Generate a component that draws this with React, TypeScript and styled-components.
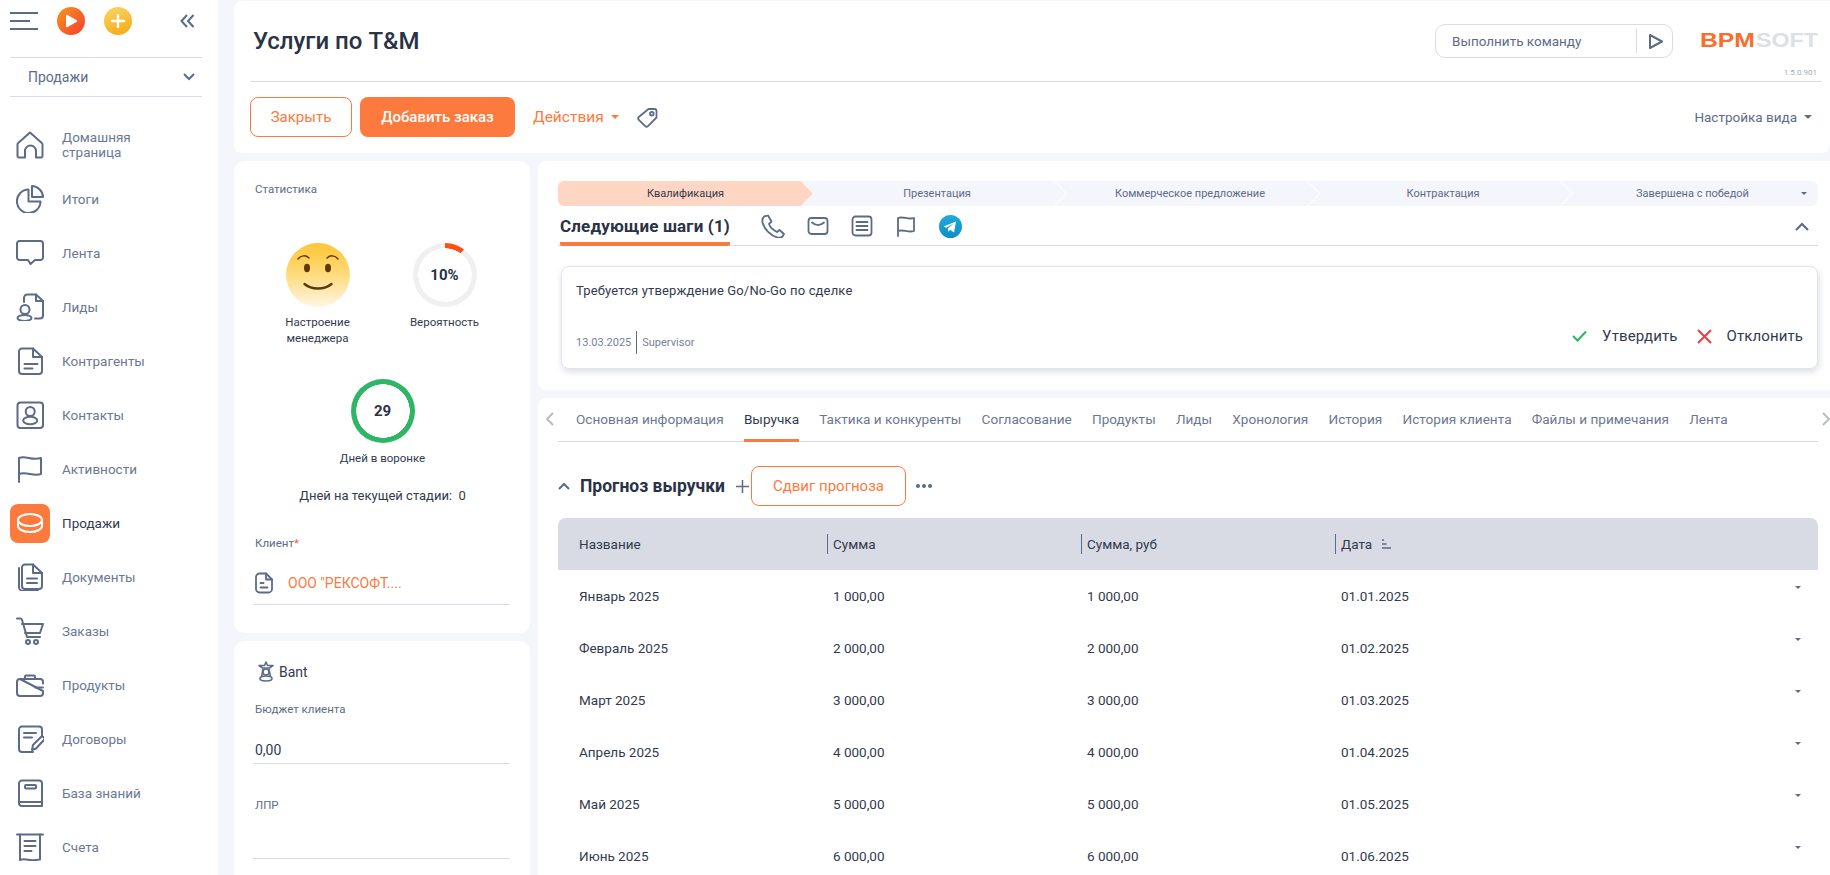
import React from 'react';
import styled, { createGlobalStyle } from 'styled-components';

const ink = '#5d6b89';
const orange = '#fd7a3e';
const line = '#d9dce5';
const text = '#323a4e';

const GlobalStyle = createGlobalStyle`
  html, body {
    margin: 0;
    padding: 0;
    height: 100%;
    background: #f4f6fb;
    font-family: Roboto, "Noto Sans", sans-serif;
    color: ${text};
  }
  * { box-sizing: border-box; }
`;

const Stroke = ({ size = 28, box = 28, width = 2, children }: { size?: number; box?: number; width?: number; children: React.ReactNode }) => (
  <svg width={size} height={size} viewBox={`0 0 ${box} ${box}`} fill="none" stroke="currentColor" strokeWidth={width} strokeLinecap="round" strokeLinejoin="round">
    {children}
  </svg>
);

const navIcons: Record<string, React.ReactNode> = {
  home: <path d="M1.500 25V13.500a2 2 0 0 1 .7-1.500L14 1.500 25.800 12a2 2 0 0 1 .7 1.500V25a1.500 1.500 0 0 1-1.500 1.500h-5V20a5.500 5.500 0 0 0-11 0v6.500H3A1.500 1.500 0 0 1 1.500 25z" />,
  pie: (
    <>
      <path d="M12.500 4.500A11.800 11.800 0 1 0 24.500 16.500H12.500z" />
      <path d="M16 1c5.500.2 10.800 5 11 11H16z" />
    </>
  ),
  chat: <path d="M3.500 2h21A2.500 2.500 0 0 1 27 4.500v14a2.500 2.500 0 0 1-2.500 2.500H19l-4.500 4-2.500-4H3.500A2.500 2.500 0 0 1 1 18.500v-14A2.500 2.500 0 0 1 3.500 2z" />,
  leads: (
    <>
      <path d="M8 9V5a3.500 3.500 0 0 1 3.500-3.500H20L27 8v14.500a3 3 0 0 1-3 3h-5" />
      <path d="M20 1.500V8h7" />
      <circle cx="9" cy="16.500" r="4.500" />
      <ellipse cx="8.500" cy="25" rx="7" ry="3" />
    </>
  ),
  doc: (
    <>
      <path d="M6 1.500h11L26 10v14a3 3 0 0 1-3 3H6a3 3 0 0 1-3-3V4.500a3 3 0 0 1 3-3z" />
      <path d="M17 1.500V10h9M8.500 17h13M8.500 21.500h8" />
    </>
  ),
  contact: (
    <>
      <rect x="1.500" y="1.500" width="25.500" height="25.500" rx="3" />
      <circle cx="14.200" cy="10.500" r="4.500" />
      <ellipse cx="14.200" cy="19.500" rx="7" ry="3.800" />
    </>
  ),
  flag: <path d="M3 27V3c7-3 12 3 22 0v16c-8 3-14-3-22 0" />,
  sale: (
    <>
      <ellipse cx="14" cy="11" rx="12" ry="6" />
      <path d="M2 11v6c0 3.300 5.400 6 12 6s12-2.700 12-6v-6" />
    </>
  ),
  docs: (
    <>
      <path d="M9 1.500h8L26 10v13a3 3 0 0 1-3 3H9a3 3 0 0 1-3-3V4.500a3 3 0 0 1 3-3z" />
      <path d="M17 1.500V10h9M11 15.500h10M11 20h10" />
      <path d="M3 5v19a4 4 0 0 0 4 4h15" />
    </>
  ),
  cart: (
    <>
      <path d="M1 1.500h3.500a1.500 1.500 0 0 1 1.400 1L11 20h13" />
      <path d="M6 7h21l-3 9H9" />
      <circle cx="12" cy="25" r="2" />
      <circle cx="20" cy="25" r="2" />
    </>
  ),
  wallet: (
    <>
      <path d="M9 8V5.500a1 1 0 0 1 1-1h8a1 1 0 0 1 1 1V8" />
      <path d="M4 8h20a3 3 0 0 1 3 3v1.500M27 20v2a3 3 0 0 1-3 3H4a3 3 0 0 1-3-3V11a3 3 0 0 1 3-3z" />
      <path d="M19 16.500h8" />
    </>
  ),
  contract: (
    <>
      <path d="M17 27H6a3 3 0 0 1-3-3V4.500a3 3 0 0 1 3-3h17a3 3 0 0 1 3 3V11" />
      <path d="M8 8h12M8 12.500h8" />
      <path d="M16 25l1-5 8-8c1.500-1.500 4.500 1 3 3l-8 8.500z" />
    </>
  ),
  book: (
    <>
      <path d="M6 1.500h17a3 3 0 0 1 3 3V27H6a3 3 0 0 1-3-3V4.500a3 3 0 0 1 3-3z" />
      <path d="M3 23h23" />
      <rect x="9" y="6" width="11" height="3.500" rx="1" />
    </>
  ),
  bill: (
    <>
      <path d="M1 1.500h26" />
      <path d="M4 1.500V27c3.300-1.500 6.700-.5 10 0s6.700 0 10-.5V1.500" />
      <path d="M8.500 8h11M8.500 13h11M8.500 18h7" />
    </>
  ),
};

const nav = [
  ['home', 'Домашняя страница'],
  ['pie', 'Итоги'],
  ['chat', 'Лента'],
  ['leads', 'Лиды'],
  ['doc', 'Контрагенты'],
  ['contact', 'Контакты'],
  ['flag', 'Активности'],
  ['sale', 'Продажи'],
  ['docs', 'Документы'],
  ['cart', 'Заказы'],
  ['wallet', 'Продукты'],
  ['contract', 'Договоры'],
  ['book', 'База знаний'],
  ['bill', 'Счета'],
];

const stages = ['Квалификация', 'Презентация', 'Коммерческое предложение', 'Контрактация', 'Завершена с победой'];
const tabs = ['Основная информация', 'Выручка', 'Тактика и конкуренты', 'Согласование', 'Продукты', 'Лиды', 'Хронология', 'История', 'История клиента', 'Файлы и примечания', 'Лента'];
const rows = [
  ['Январь 2025', '1 000,00', '01.01.2025'],
  ['Февраль 2025', '2 000,00', '01.02.2025'],
  ['Март 2025', '3 000,00', '01.03.2025'],
  ['Апрель 2025', '4 000,00', '01.04.2025'],
  ['Май 2025', '5 000,00', '01.05.2025'],
  ['Июнь 2025', '6 000,00', '01.06.2025'],
];

export default function App() {
  return (
    <Page>
      <GlobalStyle />
      <Sidebar>
        <SideTop>
          <Burger><i /><i /><i /></Burger>
          <RoundBtn $kind="play">
            <svg width="14" height="14" viewBox="0 0 14 14"><path d="M2 1.500a.8.8 0 0 1 1.200-.7l9.500 5.500a.8.8 0 0 1 0 1.400L3.200 13.200A.8.8 0 0 1 2 12.500z" fill="#fff" /></svg>
          </RoundBtn>
          <RoundBtn $kind="add">
            <svg width="14" height="14" viewBox="0 0 14 14"><path d="M7 1v12M1 7h12" stroke="#fff" strokeWidth="2.400" strokeLinecap="round" /></svg>
          </RoundBtn>
          <Collapse>
            <svg width="15" height="14" viewBox="0 0 15 14" fill="none" stroke={ink} strokeWidth="2"><path d="M7 1L1.500 7 7 13M13.500 1L8 7l5.500 6" /></svg>
          </Collapse>
        </SideTop>
        <SectionSelect>
          Продажи
          <svg width="12" height="8" viewBox="0 0 12 8" fill="none" stroke={ink} strokeWidth="2"><path d="M1 1l5 5 5-5" /></svg>
        </SectionSelect>
        <NavList>
          {nav.map(([icon, label]) => (
            <NavItem key={label} $active={label === 'Продажи'}>
              <NavIcon $active={label === 'Продажи'}>
                <Stroke>{navIcons[icon]}</Stroke>
              </NavIcon>
              <span>{label}</span>
            </NavItem>
          ))}
        </NavList>
      </Sidebar>

      <Main>
        <HeaderCard>
          <HeaderTop>
            <Title>Услуги по T&amp;M</Title>
            <CommandBox>
              <span>Выполнить команду</span>
              <CommandRun>
                <svg width="16" height="17" viewBox="0 0 16 17" fill="none" stroke={ink} strokeWidth="2" strokeLinejoin="round"><path d="M2 2l12 6.500L2 15z" /></svg>
              </CommandRun>
            </CommandBox>
            <LogoBox>
              <svg width="120" height="24" viewBox="0 0 120 24">
                <text x="0" y="18" textLength="55" lengthAdjust="spacingAndGlyphs" fontFamily="Liberation Sans" fontWeight="700" fontSize="19.500" fill="#fa6e2d">BPM</text>
                <text x="56" y="18" textLength="62" lengthAdjust="spacingAndGlyphs" fontFamily="Liberation Sans" fontWeight="700" fontSize="19.500" fill="#dcdfe6">SOFT</text>
              </svg>
              <Version>1.5.0.901</Version>
            </LogoBox>
          </HeaderTop>
          <HeaderActions>
            <OutlineBtn $w={102}>Закрыть</OutlineBtn>
            <FilledBtn>Добавить заказ</FilledBtn>
            <ActionsLink>Действия<Caret $color={orange} /></ActionsLink>
            <TagIcon>
              <svg width="21" height="21" viewBox="0 0 21 21" fill="none" stroke={ink} strokeWidth="1.800" strokeLinejoin="round">
                <path d="M11.500 2h6a2 2 0 0 1 2 2v6.500L11 19.200a2 2 0 0 1-2.800 0l-6.400-6.400a2 2 0 0 1 0-2.800z" />
                <circle cx="14.800" cy="6.700" r="1.800" />
              </svg>
            </TagIcon>
            <ViewSettings>Настройка вида<Caret $color={ink} /></ViewSettings>
          </HeaderActions>
        </HeaderCard>

        <Columns>
          <LeftColumn>
            <StatCard>
              <SmallLabel>Статистика</SmallLabel>
              <StatRow>
                <StatItem>
                  <Smiley>
                    <svg width="64" height="64" viewBox="0 0 64 64" fill="none" stroke="#5f3a07" strokeLinecap="round">
                      <path d="M12 16c3-4 8-4 11-1M41 15c3-3 8-3 11 1" strokeWidth="1.500" />
                      <ellipse cx="21" cy="25" rx="3" ry="4.200" fill="#5f3a07" stroke="none" />
                      <ellipse cx="42" cy="25" rx="3" ry="4.200" fill="#5f3a07" stroke="none" />
                      <path d="M18.500 41c7 6 20 6 27 0" strokeWidth="2.400" />
                    </svg>
                  </Smiley>
                  <StatCaption>Настроение менеджера</StatCaption>
                </StatItem>
                <StatItem>
                  <Ring $color="#ff4f12" $value={10}>10%</Ring>
                  <StatCaption>Вероятность</StatCaption>
                </StatItem>
              </StatRow>
              <FunnelItem>
                <Ring $color="#2fb566" $value={100}>29</Ring>
                <StatCaption>Дней в воронке</StatCaption>
              </FunnelItem>
              <StageDays>Дней на текущей стадии:&nbsp; 0</StageDays>
              <ClientLabel>Клиент<Required>*</Required></ClientLabel>
              <ClientValue>
                <svg width="18" height="22" viewBox="0 0 18 22" fill="none" stroke={ink} strokeWidth="1.800" strokeLinejoin="round" strokeLinecap="round">
                  <path d="M4.500 1.500H11l6 6v9.500a3.500 3.500 0 0 1-3.500 3.500h-9A3.500 3.500 0 0 1 1 17V5a3.500 3.500 0 0 1 3.500-3.500z" />
                  <path d="M11 1.500v6h6M5.500 11h3M5.500 15.500h7" />
                </svg>
                <ClientLink>ООО "РЕКСОФТ....</ClientLink>
              </ClientValue>
            </StatCard>
            <BantCard>
              <BantHead>
                <svg width="16" height="22" viewBox="0 0 16 22" fill="none" stroke={ink} strokeWidth="1.600" strokeLinejoin="round">
                  <path d="M8 1l1.500 3.500H15l-3.500 2.500h-7L1 4.500h5.500z" />
                  <circle cx="8" cy="11" r="3" />
                  <path d="M5 8l-1.500 8M11 8l1.500 8" />
                  <ellipse cx="8" cy="17.500" rx="6" ry="2.500" />
                </svg>
                Bant
              </BantHead>
              <BudgetLabel>Бюджет клиента</BudgetLabel>
              <BudgetValue>0,00</BudgetValue>
              <PersonLabel>ЛПР</PersonLabel>
              <PersonValue />
            </BantCard>
          </LeftColumn>

          <RightColumn>
            <StepsCard>
              <Stepper>
                {stages.map((s, i) => (
                  <Step key={s} $first={i === 0} $last={i === stages.length - 1}>{s}</Step>
                ))}
                <StepperCaret><Caret $color={ink} $small /></StepperCaret>
              </Stepper>
              <NextHead>
                <NextTitle>Следующие шаги (1)</NextTitle>
                <NextIcons>
                  <Stroke size={24} box={24} width={1.800}>
                    <path d="M3.500 2.500l3.500-1 3.500 6-2.500 2.500c1 3 4 6 8 8l2.500-2 4.500 4-1.500 2.500c-1 1-3 1.500-5 1-7-2-13-8-15-15-.5-3 .5-5.500 2.500-6.500z" />
                  </Stroke>
                  <Stroke size={22} box={22} width={1.800}>
                    <rect x="1.500" y="3" width="19" height="16" rx="3" />
                    <path d="M5 7.500c4 3.500 8 3.500 12 0" />
                  </Stroke>
                  <Stroke size={22} box={22} width={1.800}>
                    <rect x="1.500" y="1.500" width="19" height="19" rx="3" />
                    <path d="M5.500 7h11M5.500 11h11M5.500 15h11" />
                  </Stroke>
                  <Stroke size={22} box={22} width={1.800}>
                    <path d="M3 21V3c5-2 10 2 16 0v13c-6 2-11-2-16 0" />
                  </Stroke>
                  <svg width="23" height="23" viewBox="0 0 23 23">
                    <defs>
                      <linearGradient id="tg" x1="0" y1="0" x2="0" y2="1">
                        <stop offset="0" stopColor="#24a9dd" />
                        <stop offset="1" stopColor="#0a8ec7" />
                      </linearGradient>
                    </defs>
                    <circle cx="11.500" cy="11.500" r="11.500" fill="url(#tg)" />
                    <path d="M4.500 11.500l12.500-5-2 11-3.800-2.700-2 1.900-.4-3.200 5.700-5-7.200 4.300z" fill="#fff" />
                  </svg>
                </NextIcons>
                <CollapseUp>
                  <svg width="14" height="9" viewBox="0 0 14 9" fill="none" stroke={ink} strokeWidth="2.200"><path d="M1 8l6-6 6 6" /></svg>
                </CollapseUp>
              </NextHead>
              <TaskCard>
                <TaskText>Требуется утверждение Go/No-Go по сделке</TaskText>
                <TaskFoot>
                  <TaskMeta>
                    <span>13.03.2025</span>
                    <span>Supervisor</span>
                  </TaskMeta>
                  <TaskAction>
                    <svg width="15" height="12" viewBox="0 0 15 12" fill="none" stroke="#2fb566" strokeWidth="2"><path d="M1 6l4.500 4.500L14 1.500" /></svg>
                    Утвердить
                  </TaskAction>
                  <TaskAction>
                    <svg width="15" height="15" viewBox="0 0 15 15" fill="none" stroke="#f23c3c" strokeWidth="2"><path d="M1 1l13 13M14 1L1 14" /></svg>
                    Отклонить
                  </TaskAction>
                </TaskFoot>
              </TaskCard>
            </StepsCard>

            <DetailCard>
              <TabBar>
                <TabArrow $side="left">
                  <svg width="8" height="14" viewBox="0 0 8 14" fill="none" stroke="#b5b9c3" strokeWidth="1.800"><path d="M7 1L1 7l6 6" /></svg>
                </TabArrow>
                {tabs.map((t) => (
                  <Tab key={t} $active={t === 'Выручка'}>{t}</Tab>
                ))}
                <TabArrow $side="right">
                  <svg width="8" height="14" viewBox="0 0 8 14" fill="none" stroke="#b5b9c3" strokeWidth="1.800"><path d="M1 1l6 6-6 6" /></svg>
                </TabArrow>
              </TabBar>
              <ForecastHead>
                <svg width="12" height="8" viewBox="0 0 12 8" fill="none" stroke={ink} strokeWidth="2"><path d="M1 7l5-5 5 5" /></svg>
                <ForecastTitle>Прогноз выручки</ForecastTitle>
                <PlusMark>
                  <svg width="13" height="13" viewBox="0 0 13 13" stroke={ink} strokeWidth="1.500"><path d="M6.500 0v13M0 6.500h13" /></svg>
                </PlusMark>
                <OutlineBtn $w={155}>Сдвиг прогноза</OutlineBtn>
                <Dots><i /><i /><i /></Dots>
              </ForecastHead>
              <Table>
                <HeadRow>
                  <HeadCell>Название</HeadCell>
                  <HeadCell $sep>Сумма</HeadCell>
                  <HeadCell $sep>Сумма, руб</HeadCell>
                  <HeadCell $sep>
                    Дата
                    <SortIcon>
                      <svg width="9" height="10" viewBox="0 0 9 10" stroke={ink} strokeWidth="1.300"><path d="M0 1h2M0 5h4.500M0 9h9" /></svg>
                    </SortIcon>
                  </HeadCell>
                </HeadRow>
                {rows.map(([name, sum, date]) => (
                  <BodyRow key={name}>
                    <BodyCell>{name}</BodyCell>
                    <BodyCell>{sum}</BodyCell>
                    <BodyCell>{sum}</BodyCell>
                    <BodyCell>{date}</BodyCell>
                    <RowCaret><Caret $color={ink} $small /></RowCaret>
                  </BodyRow>
                ))}
              </Table>
            </DetailCard>
          </RightColumn>
        </Columns>
      </Main>
    </Page>
  );
}

const Page = styled.div`
  display: flex;
  width: 1830px;
  height: 875px;
  overflow: hidden;
  background: #f4f6fb;
`;

const Sidebar = styled.aside`
  flex: 0 0 218px;
  background: #fff;
  padding: 0 16px 0 10px;
  overflow: hidden;
`;

const SideTop = styled.div`
  display: flex;
  align-items: center;
  height: 57px;
  padding-bottom: 15px;
`;

const Burger = styled.div`
  width: 28px;
  height: 18px;
  display: flex;
  flex-direction: column;
  justify-content: space-between;
  margin-right: 19px;

  i {
    display: block;
    height: 2px;
    background: ${ink};
  }
  i:nth-child(2) {
    width: 20px;
  }
`;

const RoundBtn = styled.div<{ $kind: 'play' | 'add' }>`
  width: 28px;
  height: 28px;
  border-radius: 50%;
  display: flex;
  align-items: center;
  justify-content: center;
  margin-right: 19px;
  background: ${(p) =>
    p.$kind === 'play' ? 'linear-gradient(135deg, #f59a1e, #f9392f)' : 'linear-gradient(160deg, #fbd666, #f5a811)'};
`;

const Collapse = styled.div`
  margin-left: 29px;
  display: flex;
`;

const SectionSelect = styled.div`
  height: 40px;
  display: flex;
  align-items: center;
  justify-content: space-between;
  padding: 0 7px 0 18px;
  border-top: 1px solid ${line};
  border-bottom: 1px solid ${line};
  font-size: 14px;
  color: ${ink};
`;

const NavList = styled.nav`
  margin-top: 21px;
`;

const NavItem = styled.div<{ $active?: boolean }>`
  height: 54px;
  display: flex;
  align-items: center;
  gap: 12px;
  font-size: 13.500px;
  line-height: 15px;
  color: ${(p) => (p.$active ? text : '#6b7892')};
  span {
    width: 100px;
  }
`;

const NavIcon = styled.div<{ $active?: boolean }>`
  flex: 0 0 40px;
  height: 39px;
  border-radius: 8px;
  display: flex;
  align-items: center;
  justify-content: center;
  background: ${(p) => (p.$active ? orange : 'transparent')};
  color: ${(p) => (p.$active ? '#fff' : ink)};
`;

const Main = styled.main`
  flex: 1;
  margin-left: 16px;
  padding-top: 1px;
  display: flex;
  flex-direction: column;
  gap: 8px;
  min-width: 0;
`;

const HeaderCard = styled.header`
  height: 152px;
  flex: 0 0 152px;
  background: #fff;
  border-radius: 8px 0 8px 8px;
  padding: 0 8px 0 16px;
`;

const HeaderTop = styled.div`
  height: 81px;
  display: flex;
  align-items: flex-start;
  border-bottom: 1px solid ${line};
`;

const Title = styled.h1`
  margin: 26px 0 0 3px;
  font-size: 24px;
  line-height: 28px;
  font-weight: 500;
  color: #2a3245;
  flex: 1;
`;

const CommandBox = styled.div`
  width: 238px;
  height: 34px;
  margin-top: 23px;
  border: 1px solid ${line};
  border-radius: 10px;
  display: flex;
  align-items: center;
  justify-content: space-between;
  padding-left: 16px;
  font-size: 13.500px;
  color: ${ink};
`;

const CommandRun = styled.div`
  width: 36px;
  height: 24px;
  border-left: 1px solid ${line};
  display: flex;
  align-items: center;
  padding-left: 11px;
`;

const LogoBox = styled.div`
  width: 122px;
  margin-left: 27px;
  padding-top: 28px;
  display: flex;
  flex-direction: column;
`;

const Version = styled.div`
  font-size: 8px;
  line-height: 10px;
  color: #a9adb8;
  text-align: right;
  margin: 15px 5px 0 0;
`;

const HeaderActions = styled.div`
  display: flex;
  align-items: center;
  padding-top: 15px;
`;

const OutlineBtn = styled.button<{ $w: number }>`
  width: ${(p) => p.$w}px;
  height: 40px;
  border: 1px solid ${orange};
  border-radius: 8px;
  background: #fff;
  color: ${orange};
  font: 400 15px Roboto, sans-serif;
`;

const FilledBtn = styled.button`
  width: 155px;
  height: 40px;
  margin-left: 8px;
  border: 0;
  border-radius: 8px;
  background: ${orange};
  color: #fff;
  font: 500 15px Roboto, sans-serif;
`;

const ActionsLink = styled.div`
  margin-left: 18px;
  display: flex;
  align-items: center;
  gap: 7px;
  font-size: 15.500px;
  color: ${orange};
`;

const TagIcon = styled.div`
  margin-left: 18px;
  display: flex;
`;

const ViewSettings = styled.div`
  margin-left: auto;
  margin-right: 10px;
  display: flex;
  align-items: center;
  gap: 7px;
  font-size: 13.500px;
  color: ${ink};
`;

const Caret = styled.i<{ $color: string; $small?: boolean }>`
  display: inline-block;
  width: 0;
  height: 0;
  border-left: ${(p) => (p.$small ? 3 : 4)}px solid transparent;
  border-right: ${(p) => (p.$small ? 3 : 4)}px solid transparent;
  border-top: ${(p) => (p.$small ? 3 : 4)}px solid ${(p) => p.$color};
`;

const Columns = styled.div`
  flex: 1;
  display: flex;
  gap: 8px;
  min-height: 0;
`;

const LeftColumn = styled.div`
  flex: 0 0 296px;
  min-width: 0;
  display: flex;
  flex-direction: column;
  gap: 8px;
`;

const StatCard = styled.section`
  height: 472px;
  flex: 0 0 472px;
  background: #fff;
  border-radius: 10px;
  padding: 21px 20px 0 21px;
`;

const SmallLabel = styled.div`
  font-size: 11.500px;
  line-height: 14px;
  color: ${ink};
`;

const StatRow = styled.div`
  display: grid;
  grid-template-columns: 125px 129px;
  margin-top: 47px;
`;

const StatItem = styled.div`
  display: flex;
  flex-direction: column;
  align-items: center;
`;

const FunnelItem = styled(StatItem)`
  margin-top: 33px;
`;

const Smiley = styled.div`
  width: 64px;
  height: 64px;
  border-radius: 50%;
  background: linear-gradient(180deg, #fec535 0%, #ffd975 45%, #fff6e4 100%);
`;

const Ring = styled.div<{ $color: string; $value: number }>`
  width: 64px;
  height: 64px;
  border-radius: 50%;
  background:
    radial-gradient(circle closest-side, #fff 0 26.500px, transparent 27px),
    conic-gradient(${(p) => p.$color} 0 ${(p) => p.$value}%, #f0f0f0 0);
  display: flex;
  align-items: center;
  justify-content: center;
  font-size: 15px;
  font-weight: 700;
  color: #2a3245;
`;

const StatCaption = styled.div`
  width: 90px;
  margin-top: 7px;
  text-align: center;
  font-size: 11.500px;
  line-height: 16px;
  color: ${text};
`;

const StageDays = styled.div`
  margin-top: 22px;
  font-size: 13px;
  line-height: 16px;
  text-align: center;
  color: ${text};
`;

const ClientLabel = styled(SmallLabel)`
  margin-top: 32px;
`;

const Required = styled.span`
  color: #f0603a;
`;

const ClientValue = styled.div`
  height: 48px;
  margin: 7px 0 0 -2px;
  padding: 15px 0 0 2px;
  border-bottom: 1px solid ${line};
  display: flex;
  align-items: flex-start;
  gap: 15px;
`;

const ClientLink = styled.span`
  font-size: 14px;
  line-height: 22px;
  color: ${orange};
`;

const BantCard = styled.section`
  flex: 1;
  background: #fff;
  border-radius: 10px 10px 0 0;
  padding: 20px 20px 0 21px;
`;

const BantHead = styled.div`
  display: flex;
  align-items: center;
  gap: 5px;
  padding-left: 3px;
  font-size: 14px;
  color: ${text};
`;

const BudgetLabel = styled(SmallLabel)`
  margin-top: 19px;
`;

const BudgetValue = styled.div`
  height: 48px;
  margin-left: -2px;
  padding: 25px 0 0 2px;
  border-bottom: 1px solid ${line};
  font-size: 14px;
  line-height: 18px;
  color: ${text};
`;

const PersonLabel = styled(SmallLabel)`
  margin-top: 34px;
`;

const PersonValue = styled.div`
  height: 47px;
  margin-left: -2px;
  border-bottom: 1px solid ${line};
`;

const RightColumn = styled.div`
  flex: 1;
  min-width: 0;
  display: flex;
  flex-direction: column;
  gap: 8px;
`;

const StepsCard = styled.section`
  flex: 0 0 229px;
  height: 229px;
  background: #fff;
  border-radius: 8px 0 0 8px;
  padding: 20px 12px 0 20px;
`;

const Stepper = styled.div`
  position: relative;
  display: flex;
  height: 25px;
  border-radius: 6px;
  overflow: hidden;
`;

const Step = styled.div<{ $first?: boolean; $last?: boolean }>`
  flex: ${(p) => (p.$first ? '0 0 255px' : p.$last ? '1' : '0 0 264px')};
  margin-left: ${(p) => (p.$first ? 0 : -11)}px;
  display: flex;
  align-items: center;
  justify-content: center;
  padding: 0 0 1px ${(p) => (p.$first ? 0 : 6)}px;
  font-size: 11px;
  color: ${(p) => (p.$first ? text : ink)};
  background: ${(p) => (p.$first ? '#ffd6c3' : '#f4f6fb')};
  clip-path: ${(p) =>
    p.$first
      ? 'polygon(0 0, calc(100% - 12px) 0, 100% 50%, calc(100% - 12px) 100%, 0 100%)'
      : p.$last
        ? 'polygon(0 0, 100% 0, 100% 100%, 0 100%, 12px 50%)'
        : 'polygon(0 0, calc(100% - 12px) 0, 100% 50%, calc(100% - 12px) 100%, 0 100%, 12px 50%)'};
`;

const StepperCaret = styled.div`
  position: absolute;
  right: 11px;
  top: 11px;
  display: flex;
`;

const NextHead = styled.div`
  position: relative;
  height: 40px;
  display: flex;
  align-items: flex-start;
  border-bottom: 1px solid ${line};
`;

const NextTitle = styled.div`
  height: 40px;
  margin-left: 2px;
  padding-top: 9px;
  font-size: 17px;
  line-height: 22px;
  font-weight: 700;
  color: #2a3245;
  border-bottom: 4px solid ${orange};
  border-radius: 0 0 2px 2px;
  letter-spacing: 0.150px;
`;

const NextIcons = styled.div`
  display: flex;
  align-items: center;
  gap: 22px;
  margin: 8px 0 0 31px;
  color: ${ink};
`;

const CollapseUp = styled.div`
  margin-left: auto;
  margin-top: 16px;
  margin-right: 9px;
  display: flex;
`;

const TaskCard = styled.div`
  height: 103px;
  margin: 20px 0 0 3px;
  padding: 15px 14px 0 14px;
  border: 1px solid #e2e4ea;
  border-radius: 8px;
  box-shadow: 1px 3px 6px rgba(60, 70, 100, 0.18);
`;

const TaskText = styled.div`
  font-size: 13px;
  line-height: 18px;
  color: ${text};
  letter-spacing: 0.150px;
`;

const TaskFoot = styled.div`
  display: flex;
  align-items: flex-start;
  margin-top: 27px;
`;

const TaskMeta = styled.div`
  display: flex;
  align-items: center;
  margin: 4px auto 0 0;
  font-size: 11px;
  color: #76829b;

  span + span {
    margin-left: 5px;
    padding: 5px 0 5px 5px;
    border-left: 1px solid ${ink};
  }
`;

const TaskAction = styled.div`
  display: flex;
  align-items: center;
  gap: 15px;
  margin-left: 19px;
  font-size: 15px;
  letter-spacing: 0.100px;
  color: ${text};
`;

const DetailCard = styled.section`
  flex: 1;
  background: #fff;
  border-radius: 8px 0 0 0;
  padding: 0 12px 0 20px;
  min-height: 0;
  overflow: hidden;
`;

const TabBar = styled.div`
  position: relative;
  height: 44px;
  display: flex;
  align-items: flex-start;
  gap: 20.200px;
  padding-left: 18px;
  border-bottom: 1px solid ${line};
`;

const TabArrow = styled.div<{ $side: 'left' | 'right' }>`
  position: absolute;
  top: 14px;
  ${(p) => (p.$side === 'left' ? 'left: -12px;' : 'right: -12px;')}
  display: flex;
`;

const Tab = styled.div<{ $active?: boolean }>`
  height: 44px;
  padding-top: 13px;
  font-size: 13.600px;
  line-height: 16px;
  white-space: nowrap;
  color: ${(p) => (p.$active ? text : '#6b7892')};
  border-bottom: 3px solid ${(p) => (p.$active ? orange : 'transparent')};
`;

const ForecastHead = styled.div`
  height: 40px;
  margin-top: 24px;
  display: flex;
  align-items: center;
`;

const ForecastTitle = styled.div`
  margin: 0 11px 0 10px;
  font-size: 17.500px;
  font-weight: 700;
  color: #2a3245;
`;

const PlusMark = styled.span`
  display: flex;
  margin-right: 2px;
`;

const Dots = styled.div`
  display: flex;
  gap: 2px;
  margin-left: 10px;

  i {
    width: 4px;
    height: 4px;
    border-radius: 50%;
    background: ${ink};
  }
`;

const Table = styled.div`
  margin-top: 12px;
`;

const HeadRow = styled.div`
  display: grid;
  grid-template-columns: 269px 254px 254px 1fr;
  height: 52px;
  background: #d8dbe3;
  border-radius: 8px 8px 0 0;
  align-items: center;
`;

const HeadCell = styled.div<{ $sep?: boolean }>`
  height: 20px;
  display: flex;
  align-items: center;
  padding-left: ${(p) => (p.$sep ? 5 : 21)}px;
  border-left: ${(p) => (p.$sep ? `1px solid ${ink}` : '0')};
  font-size: 13.500px;
  color: ${text};
`;

const SortIcon = styled.span`
  margin-left: 10px;
  display: flex;
`;

const BodyRow = styled(HeadRow)`
  position: relative;
  background: #fff;
  border-radius: 0;
`;

const BodyCell = styled.div`
  padding-left: 6px;
  font-size: 13.500px;
  color: ${text};

  &:first-child {
    padding-left: 21px;
  }
`;

const RowCaret = styled.div`
  position: absolute;
  right: 17px;
  top: 16px;
  display: flex;
`;
